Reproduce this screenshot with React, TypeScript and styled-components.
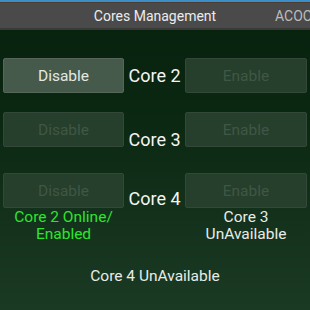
import React from 'react';
import styled, { createGlobalStyle } from 'styled-components';

const GlobalStyle = createGlobalStyle`
  html, body {
    margin: 0;
    padding: 0;
    width: 310px;
    height: 310px;
    overflow: hidden;
  }
  body {
    font-family: Roboto, "Liberation Sans", sans-serif;
  }
`;

interface CoreRow {
  name: string;
  disableActive: boolean;
  enableActive: boolean;
  labelOffset: number;
  gap: number;
}

const rows: CoreRow[] = [
  { name: 'Core 2', disableActive: true, enableActive: false, labelOffset: 7, gap: 0 },
  { name: 'Core 3', disableActive: false, enableActive: false, labelOffset: 17, gap: 19 },
  { name: 'Core 4', disableActive: false, enableActive: false, labelOffset: 15, gap: 26 },
];

const App = () => {
  return (
    <Screen>
      <GlobalStyle />
      <StatusStripe />
      <TitleBar>
        <Title>Cores Management</Title>
        <Brand>ACOO</Brand>
      </TitleBar>
      <Content>
        {rows.map((row) => (
          <Row key={row.name} $gap={row.gap}>
            <CoreButton $active={row.disableActive}>Disable</CoreButton>
            <CoreLabel $offset={row.labelOffset}>{row.name}</CoreLabel>
            <CoreButton $active={row.enableActive}>Enable</CoreButton>
          </Row>
        ))}
        <StatusRow>
          <Status $online>
            Core 2 Online/
            <br />
            Enabled
          </Status>
          <Status>
            Core 3
            <br />
            UnAvailable
          </Status>
        </StatusRow>
        <BottomStatus>Core 4 UnAvailable</BottomStatus>
      </Content>
    </Screen>
  );
};

export default App;

const Screen = styled.div`
  width: 310px;
  height: 310px;
  display: flex;
  flex-direction: column;
  background: linear-gradient(180deg, #06200c 0%, #0b2813 40%, #1b3a24 100%);
  overflow: hidden;
`;

const StatusStripe = styled.div`
  height: 2px;
  background: #3b8fc9;
  border-bottom: 1px solid #4a3c33;
`;

const TitleBar = styled.div`
  height: 25px;
  position: relative;
  display: flex;
  align-items: center;
  justify-content: center;
  background: #4a4a4a;
  border-bottom: 2px solid #3a3a3a;
`;

const Title = styled.div`
  color: #ececec;
  font-size: 14px;
  padding-top: 1px;
`;

const Brand = styled.div`
  position: absolute;
  left: 275px;
  top: 5px;
  width: 35px;
  overflow: hidden;
  color: #bcbcbc;
  font-size: 14px;
  white-space: nowrap;
`;

const Content = styled.div`
  display: flex;
  flex-direction: column;
  padding: 28px 3px 0 3px;
`;

const Row = styled.div<{ $gap: number }>`
  display: grid;
  grid-template-columns: 121px 1fr 122px;
  align-items: start;
  height: 35px;
  margin-top: ${({ $gap }) => $gap}px;
`;

const CoreButton = styled.div<{ $active: boolean }>`
  height: 33px;
  display: flex;
  align-items: center;
  justify-content: center;
  border-radius: 2px;
  border: 1px solid ${({ $active }) => ($active ? '#56675a' : '#34483a')};
  background: ${({ $active }) => ($active ? '#465a4b' : '#263e2c')};
  color: ${({ $active }) => ($active ? '#e4e8e4' : '#3f5745')};
  font-size: 15.5px;
`;

const CoreLabel = styled.div<{ $offset: number }>`
  padding-top: ${({ $offset }) => $offset}px;
  text-align: center;
  color: #f4f4f4;
  font-size: 18px;
  line-height: 22px;
`;

const StatusRow = styled.div`
  display: grid;
  grid-template-columns: 121px 1fr 122px;
  grid-template-areas: 'left . right';
  padding-top: 1px;
`;

const Status = styled.div<{ $online?: boolean }>`
  grid-area: ${({ $online }) => ($online ? 'left' : 'right')};
  text-align: center;
  color: ${({ $online }) => ($online ? '#2de52d' : '#e8ece8')};
  font-size: 15.5px;
  line-height: 17px;
  white-space: nowrap;
`;

const BottomStatus = styled.div`
  margin-top: 25px;
  text-align: center;
  color: #e8ece8;
  font-size: 15.5px;
  line-height: 17px;
`;
